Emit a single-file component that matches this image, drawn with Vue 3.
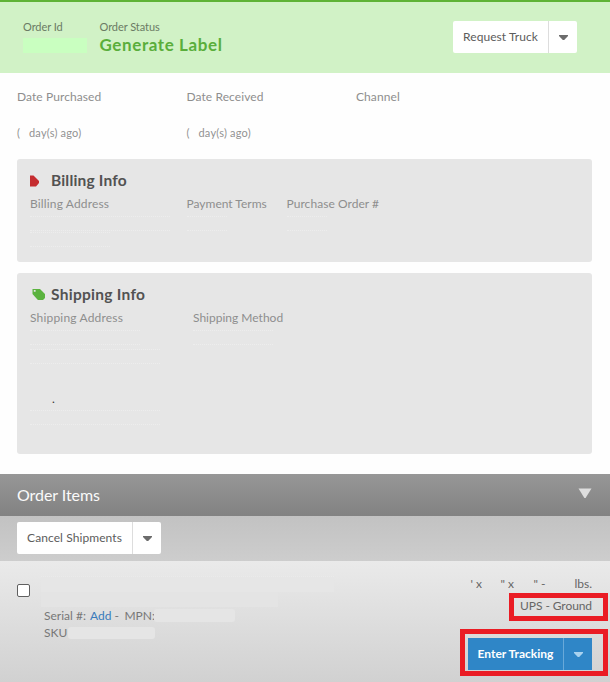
<script setup>
const dates = [
  { label: 'Date Purchased', ago: true, cls: 'purchased' },
  { label: 'Date Received', ago: true, cls: 'received' },
  { label: 'Channel', ago: false, cls: 'channel' },
]
</script>

<template>
  <div class="page">
    <header class="status-bar">
      <div class="field id-field">
        <span class="small">Order Id</span>
        <span class="blank-id"></span>
      </div>
      <div class="field">
        <span class="small">Order Status</span>
        <strong class="status">Generate Label</strong>
      </div>
      <div class="split request">
        <button class="main"><span class="t-request">Request Truck</span></button>
        <button class="drop"><svg width="9" height="6" viewBox="0 0 9 6"><path d="M0 0H9V1L5.2 5H3.8L0 1Z" /></svg></button>
      </div>
    </header>

    <section class="dates">
      <div v-for="d in dates" :key="d.label" class="date">
        <span class="label" :class="d.cls">{{ d.label }}</span>
        <span v-if="d.ago" class="ago"><span class="paren">(</span>day(s) ago)</span>
      </div>
    </section>

    <section class="card billing">
      <h2>
        <svg width="10" height="12" viewBox="0 0 10 12" class="red"><path d="M0 0.5H3.5L9 6V8L6 11.5H0Z" /></svg>
        <span class="t-bill">Billing Info</span>
      </h2>
      <div class="columns">
        <div class="col c1"><span class="label t-ba">Billing Address</span><i class="trace w140"></i><i class="trace w80 second"></i></div>
        <div class="col c2"><span class="label t-pt">Payment Terms</span><i class="trace w40"></i></div>
        <div class="col"><span class="label t-po">Purchase Order #</span><i class="trace w40"></i></div>
      </div>
    </section>

    <section class="card shipping">
      <h2>
        <svg width="14" height="13" viewBox="0 0 14 13" class="green"><path fill-rule="evenodd" d="M0.5 1H8L13 6V10L11 12H6L4.5 10.5L0.5 6ZM1.8 2V3.8H3.6V2Z" /></svg>
        <span class="t-ship">Shipping Info</span>
      </h2>
      <div class="columns">
        <div class="col s1">
          <span class="label t-sa">Shipping Address</span>
          <i class="trace w110"></i><i class="trace w130"></i>
          <span class="dot">.</span><i class="trace w130 low"></i>
        </div>
        <div class="col"><span class="label t-sm">Shipping Method</span><i class="trace w80"></i></div>
      </div>
    </section>

    <section class="items-head">
      <h3>Order Items</h3>
      <svg width="14" height="11" viewBox="0 0 14 11"><path d="M0.5 0.5H13.5L7.6 10H6.4Z" /></svg>
    </section>

    <div class="toolbar">
      <div class="split cancel">
        <button class="main"><span class="t-cancel">Cancel Shipments</span></button>
        <button class="drop"><svg width="9" height="6" viewBox="0 0 9 6"><path d="M0 0H9V1L5.2 5H3.8L0 1Z" /></svg></button>
      </div>
    </div>

    <section class="item">
      <input type="checkbox" aria-label="Select item" />
      <div class="details">
        <div class="blank-title"><i class="line-a"></i><i class="line-b"></i></div>
        <div class="meta"><span class="serial">Serial #:</span><a>Add</a><span class="dash">-</span><span class="mpn">MPN:</span><i class="blank-mpn"></i></div>
        <div class="meta"><span class="sku">SKU</span><i class="blank-sku"></i></div>
      </div>
      <div class="fulfil">
        <div class="dims"><span class="d1">' x</span><span class="d2">" x</span><span class="d3">" -</span><span>lbs.</span></div>
        <div class="method"><span class="t-ups">UPS - Ground</span><span class="mark mark-method"></span></div>
        <div class="action">
          <div class="split blue">
            <button class="main"><span class="t-enter">Enter Tracking</span></button>
            <button class="drop"><svg width="9" height="6" viewBox="0 0 9 6"><path d="M0 0H9V1L5.2 5H3.8L0 1Z" /></svg></button>
          </div>
          <span class="mark mark-action"></span>
        </div>
      </div>
    </section>
  </div>
</template>

<style>
body { margin: 0; background: #fff; }
</style>

<style scoped>
* { box-sizing: border-box; }
.page { width: 610px; height: 682px; overflow: hidden; background: #fefefe; font-family: Lato, "Liberation Sans", sans-serif; font-size: 12px; line-height: 16px; color: #666; white-space: nowrap; }
.status-bar { height: 73px; background: #d1f2c6; border-top: 2px solid #5fb336; display: flex; align-items: flex-start; padding: 17px 33px 0 23px; }
.field { display: flex; flex-direction: column; }
.id-field { width: 76.5px; }
.small { font-size: 11px; color: #6b7b64; letter-spacing: -.06px; }
.blank-id { width: 64px; height: 15px; margin-top: 3px; background: #c9ffc0; }
.status { font-size: 17px; line-height: 20px; color: #5aae3b; letter-spacing: .6px; }
.split { display: flex; height: 32px; border-radius: 2px; overflow: hidden; background: #fff; }
.split button { border: 0; padding: 0; background: transparent; font: inherit; color: #5c5c5c; display: flex; align-items: center; justify-content: center; }
.split .drop { width: 29px; border-left: 1px solid #ddd; }
.split svg { fill: #6c6c6c; margin-top: 1px; }
.request { width: 124px; margin: 2px 0 0 auto; }
.split .main { flex: 1; }
.t-request { letter-spacing: .06px; }
.t-cancel { letter-spacing: .08px; }
.dates { display: grid; grid-template-columns: 169.5px 169.5px 1fr; padding: 16px 0 0 17px; height: 86px; color: #929292; }
.date { display: flex; flex-direction: column; gap: 20px; }
.label { color: #8e8e8e; }
.purchased, .received, .channel { letter-spacing: .08px; }
.ago { font-size: 11px; letter-spacing: .2px; }
.paren { display: inline-block; width: 12px; }
.card { margin: 0 18px 0 17px; background: #e6e6e6; border-radius: 3px; padding: 11px 13px 0; }
.billing { height: 103px; }
.shipping { height: 181px; margin-top: 11px; }
h2, h3 { margin: 0; font-weight: 700; }
h2 { height: 20px; display: flex; align-items: center; font-size: 15.5px; line-height: 20px; color: #525252; }
h2 svg { flex: none; }
.t-bill { letter-spacing: .18px; }
.t-ship { letter-spacing: .28px; }
.red { fill: #c52d30; margin: 2px 11px 0 0; }
.green { fill: #5bb33f; margin: 1px 5px 0 2px; }
.columns { display: flex; padding-top: 6px; }
.t-ba { letter-spacing: .15px; }
.t-sa { letter-spacing: .18px; }
.t-po { letter-spacing: .05px; }
.col { display: flex; flex-direction: column; align-items: flex-start; }
.c1 { width: 156.5px; }
.c2 { width: 100px; }
.s1 { width: 163px; }
.trace { height: 15px; margin-top: 4px; border-top: 1px dotted #ededed; border-bottom: 1px dotted #ededed; }
.second { margin-top: 1px; }
.w40 { width: 40px; }
.w80 { width: 80px; }
.w110 { width: 110px; }
.w130 { width: 130px; }
.w140 { width: 140px; }
.dot { margin: 27px 0 0 22px; line-height: 16px; color: #333; }
.low { margin-top: 3px; }
.items-head { height: 42px; margin-top: 20px; padding: 0 18px 0 17px; display: flex; align-items: center; justify-content: space-between; background: linear-gradient(#979797, #828282); }
h3 { color: #fafafa; font-size: 16px; line-height: 20px; font-weight: 400; letter-spacing: -.06px; }
.items-head svg { fill: #dedede; margin-bottom: 3px; }
.toolbar { height: 45px; padding: 6px 17px; background: linear-gradient(#c2c2c2, #cdcdcd); }
.cancel { width: 144px; }
.item { height: 121px; display: flex; background: linear-gradient(#eaeaea, #d1d1d1); padding: 15px 18px 0 17px; }
input { appearance: none; width: 13px; height: 13px; margin: 8px 0 0; border: 1px solid #606060; border-radius: 2px; background: #fff; }
.details { padding-left: 11px; }
.blank-title { height: 31px; display: flex; flex-direction: column; }
.line-a { width: 293px; height: 16px; background: #e6e6e6; border-top: 1px dotted #ebebeb; }
.line-b { width: 237px; height: 15px; background: #e4e4e4; }
.meta { display: flex; align-items: center; height: 17px; padding-left: 3px; color: #777; }
.meta a { color: #397bbb; }
.serial { width: 46px; }
.dash { width: 10px; padding-left: 3px; }
.mpn { margin-left: 3px; width: 30px; }
.blank-mpn { width: 81px; height: 13px; background: #e5e5e5; border-radius: 3px; }
.sku { width: 24px; }
.blank-sku { width: 87px; height: 12px; margin-top: 1px; background: #e5e5e5; border-radius: 3px; }
.fulfil { margin-left: auto; display: flex; flex-direction: column; align-items: flex-end; }
.dims { display: flex; height: 16px; }
.d1 { width: 30px; }
.d2 { width: 33px; }
.d3 { width: 41px; }
.method { position: relative; margin-top: 6px; height: 16px; }
.t-ups { letter-spacing: -.08px; }
.action { position: relative; margin-top: 24px; }
.blue { width: 124px; background: #2f86c7; border-radius: 0; }
.blue button { color: #fff; font-weight: 700; }
.blue .drop { border-left-color: #68a9d9; }
.blue svg { fill: #a9d2ef; }
.mark { position: absolute; border: 5px solid #ea1c24; pointer-events: none; }
.mark-method { top: -5px; right: -16px; width: 99px; height: 28px; }
.mark-action { top: -9px; right: -16px; width: 148px; height: 47px; }
</style>
